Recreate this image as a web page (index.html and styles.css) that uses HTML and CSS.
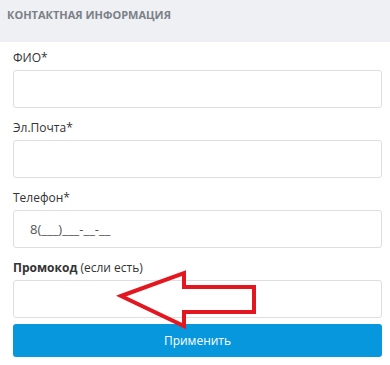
FILE: index.html
```html
<!DOCTYPE html>
<html lang="ru">
<head>
    <meta charset="UTF-8">
    <title>Контактная информация</title>
    <link rel="stylesheet" href="styles.css">
</head>
<body>
    <div class="panel-head">КОНТАКТНАЯ ИНФОРМАЦИЯ</div>

    <div class="form">
        <div class="field">
            <label for="fio">ФИО*</label>
            <input type="text" id="fio">
        </div>
        <div class="field">
            <label for="email">Эл.Почта*</label>
            <input type="text" id="email">
        </div>
        <div class="field">
            <label for="phone">Телефон*</label>
            <input type="text" id="phone" class="phone" value="8(___)___-__-__">
        </div>
        <div class="field promo">
            <label for="promo"><b>Промокод</b> (если есть)</label>
            <input type="text" id="promo">
            <!-- red hint arrow -->
            <svg class="hint-arrow" width="150" height="64" viewBox="0 0 150 64">
                <polygon points="5,28 68,5 68,19 138,19 138,44 68,44 68,58" fill="none" stroke="#e3171f" stroke-width="4" stroke-linejoin="miter"/>
            </svg>
        </div>
        <button class="apply-btn">Применить</button>
    </div>
</body>
</html>
```

FILE: styles.css
```css
body {
    margin: 0;
    padding: 0;
    background-color: #fff;
    font-family: "Open Sans", Arial, sans-serif;
    color: #333;
}
.panel-head {
    height: 42px;
    box-sizing: border-box;
    padding: 8px 0 0 7px;
    background-color: #eef0f3;
    color: #7b8087;
    font-size: 11px;
    font-weight: 700;
    line-height: 14px;
}
.form {
    padding: 7px 8px 0 13px;
}
.field {
    margin-bottom: 11px;
}
.field label {
    display: block;
    font-size: 12px;
    line-height: 18px;
    margin-bottom: 3px;
}
.field input {
    display: block;
    width: 100%;
    height: 38px;
    box-sizing: border-box;
    border: 1px solid #dedede;
    border-radius: 3px;
    padding: 0 16px;
    font-family: "Open Sans", Arial, sans-serif;
    font-size: 13px;
    color: #555;
}
.field.promo {
    position: relative;
    margin-bottom: 6px;
}
.hint-arrow {
    position: absolute;
    left: 103px;
    top: 9px;
}
.apply-btn {
    display: block;
    width: 100%;
    height: 33px;
    border: none;
    border-radius: 3px;
    background-color: #0797dc;
    color: #fff;
    font-family: "Open Sans", Arial, sans-serif;
    font-size: 12px;
    cursor: pointer;
}
```
